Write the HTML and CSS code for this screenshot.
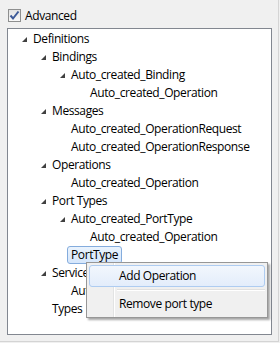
FILE: index.html
```html
<!DOCTYPE html>
<html lang="en">
<head>
    <meta charset="UTF-8">
    <title>Advanced</title>
    <link rel="stylesheet" href="styles.css">
</head>
<body>
    <div class="window">
        <label class="check-row">
            <span class="checkbox">
                <svg width="11" height="11" viewBox="0 0 11 11"><path d="M1.5 5.5 L4 8.5 L9.5 1.5" fill="none" stroke="#3d5a98" stroke-width="2"/></svg>
            </span>
            Advanced
        </label>

        <!-- Definitions tree -->
        <div class="tree">
            <div class="node lvl0 open"><span class="twisty"></span><span class="text">Definitions</span></div>
            <div class="node lvl1 open"><span class="twisty"></span><span class="text">Bindings</span></div>
            <div class="node lvl2 open"><span class="twisty"></span><span class="text">Auto_created_Binding</span></div>
            <div class="node lvl3"><span class="twisty"></span><span class="text">Auto_created_Operation</span></div>
            <div class="node lvl1 open"><span class="twisty"></span><span class="text">Messages</span></div>
            <div class="node lvl2"><span class="twisty"></span><span class="text">Auto_created_OperationRequest</span></div>
            <div class="node lvl2"><span class="twisty"></span><span class="text">Auto_created_OperationResponse</span></div>
            <div class="node lvl1 open"><span class="twisty"></span><span class="text">Operations</span></div>
            <div class="node lvl2"><span class="twisty"></span><span class="text">Auto_created_Operation</span></div>
            <div class="node lvl1 open"><span class="twisty"></span><span class="text">Port Types</span></div>
            <div class="node lvl2 open"><span class="twisty"></span><span class="text">Auto_created_PortType</span></div>
            <div class="node lvl3"><span class="twisty"></span><span class="text">Auto_created_Operation</span></div>
            <div class="node lvl2"><span class="twisty"></span><span class="text selected">PortType</span></div>
            <div class="node lvl1 open"><span class="twisty"></span><span class="text">Services</span></div>
            <div class="node lvl2"><span class="twisty"></span><span class="text">Auto_created_Service</span></div>
            <div class="node lvl1"><span class="twisty"></span><span class="text">Types</span></div>
        </div>

        <!-- Context menu for PortType -->
        <div class="menu">
            <div class="menu-item active">Add Operation</div>
            <div class="menu-sep"></div>
            <div class="menu-item">Remove port type</div>
        </div>
    </div>
</body>
</html>
```

FILE: styles.css
```css
body {
    margin: 0;
    background-color: #f0f0f0;
    font-family: "Open Sans", "Noto Sans", sans-serif;
    font-size: 12px;
    letter-spacing: -0.4px;
    color: #000;
}

.window {
    position: relative;
    width: 279px;
    height: 342px;
    border-right: 1px solid #d4d4d4;
    border-bottom: 1px solid #d4d4d4;
    box-sizing: border-box;
    padding: 7px 6px 0 7px;
}

.check-row {
    display: flex;
    align-items: center;
    gap: 4px;
    height: 14px;
    margin: 1px 0 0 1px;
}

.checkbox {
    display: flex;
    align-items: center;
    justify-content: center;
    width: 11px;
    height: 11px;
    border: 1px solid #8e8f8f;
    background: linear-gradient(#e3e3e3, #f8f8f8);
}

.tree {
    margin-top: 6px;
    height: 307px;
    border: 1px solid #828790;
    background-color: #fff;
    padding-top: 1px;
    box-sizing: border-box;
}

.node {
    display: flex;
    align-items: center;
    height: 18px;
    white-space: nowrap;
}

.lvl0 { padding-left: 12px; }
.lvl1 { padding-left: 31px; }
.lvl2 { padding-left: 50px; }
.lvl3 { padding-left: 69px; }

.twisty {
    width: 12px;
    height: 18px;
    flex: none;
    position: relative;
}

.open .twisty::before {
    content: "";
    position: absolute;
    left: 2px;
    top: 7px;
    width: 0;
    height: 0;
    border-left: 5px solid transparent;
    border-bottom: 5px solid #404040;
}

.text {
    padding: 0 2px 0 1px;
    line-height: 16px;
}

.selected {
    margin-left: -3px;
    padding: 0 3px 0 3px;
    border: 1px solid #84acdd;
    border-radius: 3px;
    background: linear-gradient(#eaf3fd, #d5e6fb);
}

.menu {
    position: absolute;
    left: 86px;
    top: 262px;
    width: 176px;
    padding: 2px;
    background-color: #f0f0f0;
    border: 1px solid #979797;
    box-shadow: 2px 2px 2px rgba(0, 0, 0, 0.35);
    background-image: linear-gradient(to right, transparent 26px, #e2e3e3 26px, #e2e3e3 27px, #fff 27px, #fff 28px, transparent 28px);
}

.menu-item {
    height: 20px;
    line-height: 20px;
    padding-left: 29px;
    border: 1px solid transparent;
    border-radius: 3px;
}

.menu-item.active {
    border-color: #aeccf1;
    background: linear-gradient(#f2f7fd, #e3edfb);
}

.menu-sep {
    height: 1px;
    margin: 2px 0 2px 28px;
    background-color: #e0e0e0;
    border-bottom: 1px solid #fff;
}
```
